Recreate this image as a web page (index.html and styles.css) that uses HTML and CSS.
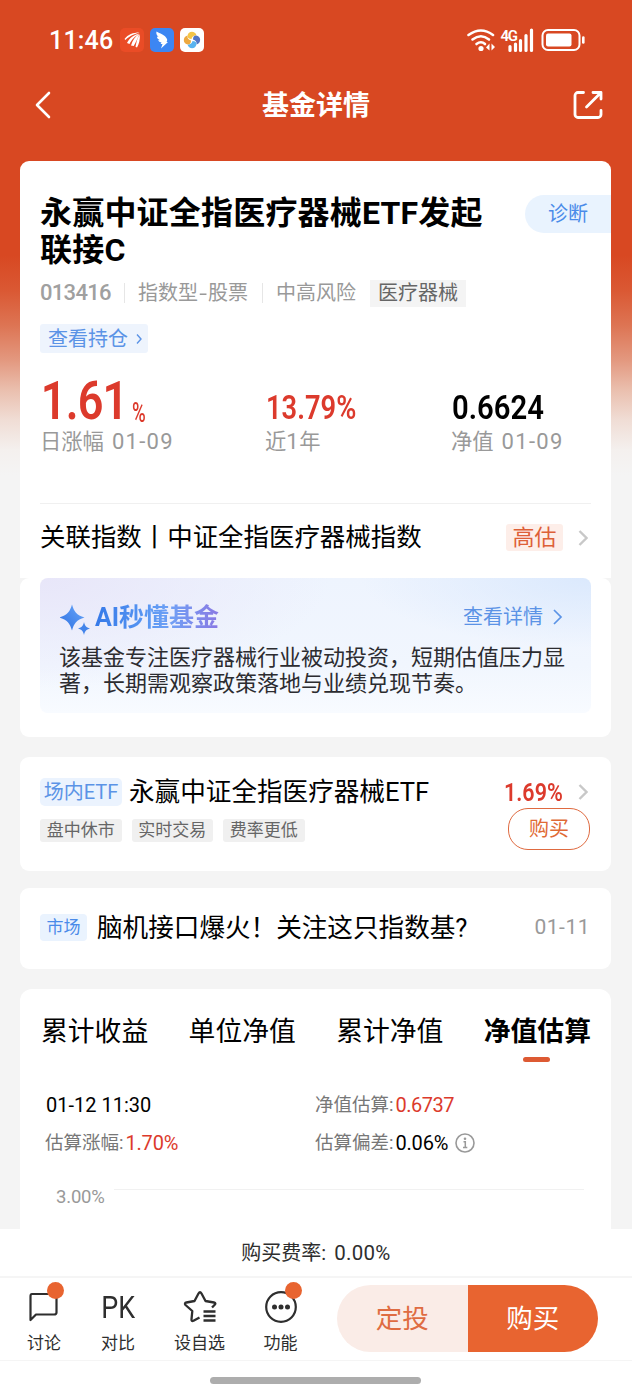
FILE: index.html
```html
<!DOCTYPE html>
<html lang="zh-CN">
<head>
<meta charset="utf-8">
<title>基金详情</title>
<link rel="stylesheet" href="styles.css">
</head>
<body>
<div class="screen">
  <main class="main">
    <header class="status">
      <span class="time">11:46</span>
      <svg class="app" viewBox="0 0 24 24"><rect width="24" height="24" rx="5" fill="#ea4c26"/><path d="M4.500 11C8 6.500 13 4.500 19.500 4.500C13 6.500 9.500 8 5.500 12ZM7 15C9.500 10 14 6.500 19.500 5.500C15 8.500 12 11 9.500 16ZM11 17.500C12.500 12 15.500 8 19.500 6C17 11 16 14 13.700 18ZM15.500 18.800C16.500 14 17 10.500 19.800 6.500C20.200 12 19 16 17 19.500Z" fill="#fff"/></svg>
      <svg class="app" viewBox="0 0 24 24"><rect width="24" height="24" rx="5" fill="#3c86f3"/><path d="M6.500 3.500C10 5.500 14.500 7 16 9.500C17.500 11 17.500 12.500 16.500 14H18L11 20.500L12.500 16H10.500L11.500 14.500C9 14 8.500 13 8.300 12L10 12.200C7.500 11 7 10 7 8.500L8.500 9C6.500 7 6 5.500 6.500 3.500Z" fill="#fff"/></svg>
      <svg class="app" viewBox="0 0 24 24"><rect width="24" height="24" rx="5" fill="#fff"/><path d="M7.500 8C8 2.500 15.500 2.500 16.500 7.500C14 7 12 8.500 11.500 11C9 11 7.500 10 7.500 8Z" fill="#f5c548"/><path d="M16 7.500C21.500 8 21.500 15.500 16.500 16.500C17 14 15.500 12 13 11.500C13 9 14 7.500 16 7.500Z" fill="#5275c6"/><path d="M16.500 16C16 21.500 8.500 21.500 7.500 16.500C10 17 12 15.500 12.500 13C15 13 16.500 14 16.500 16Z" fill="#59b3ef"/><path d="M8 16.500C2.500 16 2.500 8.500 7.500 7.500C7 10 8.500 12 11 12.500C11 15 10 16.500 8 16.500Z" fill="#eda83f"/></svg>
      <svg class="signals" viewBox="0 0 120 26">
        <g fill="none" stroke="#fff" stroke-width="2.600" stroke-linecap="round"><path d="M2.500 8Q15 -1 27 8"/><path d="M6.500 12.500Q15 6 23 12.500"/><path d="M10.500 17Q15 13.500 19 17"/></g>
        <circle cx="15" cy="21.500" r="2.600" fill="#fff"/><path d="M23.500 16.500V23.500L20 20.500ZM25.500 23.500V16.500L29 20Z" fill="#fff"/>
        <text x="34.500" y="13.500" class="net">4G</text>
        <path d="M44 23.500V19.500M49.500 23.500V17M54.500 23.500V13.500M60 23.500V8.500M65.500 23.500V3" stroke="#fff" stroke-width="3.200" stroke-linecap="round"/>
        <rect x="76.500" y="3" width="37" height="20" rx="5.500" fill="none" stroke="#fff" stroke-width="2"/><rect x="80" y="6.500" width="25.500" height="13" rx="2" fill="#fff"/><path d="M117.300 10.500V15.500" stroke="#fff" stroke-width="2.600" stroke-linecap="round"/>
      </svg>
    </header>
    <nav class="nav">
      <svg class="back" viewBox="0 0 18 30"><path d="M15 3L3 15L15 27" fill="none" stroke="#fff" stroke-width="2.600" stroke-linecap="round" stroke-linejoin="round"/></svg>
      <h1>基金详情</h1>
      <svg class="share" viewBox="0 0 30 30"><path d="M10.500 2.500H5A3 3 0 0 0 2 5.500V24.500A3 3 0 0 0 5 27.500H25A3 3 0 0 0 28 24.500V20.500M13.500 17L27 3.500M20 2.500H28V9" fill="none" stroke="#fff" stroke-width="2.800" stroke-linecap="round" stroke-linejoin="round"/></svg>
    </nav>

    <section class="summary">
      <div class="head">
        <h2>永赢中证全指医疗器械ETF发起<br>联接C</h2>
        <span class="diagnose">诊断</span>
      </div>
      <div class="meta">
        <span class="code">013416</span><i class="sep"></i><span class="kind">指数型<b class="dash">-</b>股票</span><i class="sep"></i><span class="risk">中高风险</span><span class="sector">医疗器械</span>
      </div>
      <div class="holding"><span>查看持仓</span><svg width="6" height="12" viewBox="0 0 6 12"><path d="M1 1.500L5 6L1 10.500" fill="none" stroke="#5b93e6" stroke-width="1.400"/></svg></div>
      <div class="stats">
        <div class="stat"><div class="num red"><span class="big">1.61</span><span class="pct">%</span></div><div class="lab">日涨幅<span class="d date">01-09</span></div></div>
        <div class="stat"><div class="num red"><span class="mid year">13.79%</span></div><div class="lab">近<span class="d">1</span>年</div></div>
        <div class="stat"><div class="num"><span class="mid nav-val">0.6624</span></div><div class="lab">净值<span class="d date">01-09</span></div></div>
      </div>
      <div class="index-row"><span class="index-name">关联指数丨中证全指医疗器械指数</span><span class="high">高估</span><svg width="10" height="18" viewBox="0 0 10 18"><path d="M1.500 2L8.500 9L1.500 16" fill="none" stroke="#c8c8c8" stroke-width="2.400"/></svg></div>
    </section>

    <section class="card ai">
      <div class="ai-box">
        <div class="ai-head">
          <svg width="32" height="32" viewBox="0 0 32 32"><defs><linearGradient id="g" x1="0" y1="1" x2="1" y2="0"><stop offset="0" stop-color="#2d6fe0"/><stop offset="1" stop-color="#6aa8fb"/></linearGradient></defs><path d="M12 0.500C14 7.500 16.500 11 24.500 13.500C16.500 16 14 19.500 12 26.500C10 19.500 7.500 16 -0.500 13.500C7.500 11 10 7.500 12 0.500Z" fill="url(#g)"/><path d="M24 18C25 22 26 23.300 30 24.500C26 25.700 25 27 24 31C23 27 22 25.700 18 24.500C22 23.300 23 22 24 18Z" fill="#4384ea"/></svg>
          <span class="ai-title">AI秒懂基金</span>
          <span class="ai-link">查看详情</span>
          <svg width="10" height="18" viewBox="0 0 10 18"><path d="M1 2L8 9L1 16" fill="none" stroke="#5b93e6" stroke-width="1.700"/></svg>
        </div>
        <p>该基金专注医疗器械行业被动投资，短期估值压力显著，长期需观察政策落地与业绩兑现节奏。</p>
      </div>
    </section>

    <section class="card etf">
      <div class="etf-left">
        <div class="etf-title"><span class="etf-tag">场内ETF</span><span class="etf-name">永赢中证全指医疗器械ETF</span></div>
        <div class="chips"><span>盘中休市</span><span>实时交易</span><span>费率更低</span></div>
      </div>
      <div class="etf-right">
        <div class="etf-rate"><span class="rate">1.69%</span><svg width="10" height="18" viewBox="0 0 10 18"><path d="M1.500 2L8.500 9L1.500 16" fill="none" stroke="#c8c8c8" stroke-width="2.400"/></svg></div>
        <span class="buy-small">购买</span>
      </div>
    </section>

    <section class="card news"><span class="news-tag">市场</span><span class="news-title">脑机接口爆火！关注这只指数基?</span><span class="news-date">01-11</span></section>

    <section class="card chart">
      <div class="tabs"><span>累计收益</span><span>单位净值</span><span>累计净值</span><span class="active">净值估算</span></div>
      <div class="estimates">
        <div><span class="v stamp">01-12 11:30</span></div>
        <div>净值估算:<span class="v red">0.6737</span></div>
        <div class="shift">估算涨幅:<span class="v red">1.70%</span></div>
        <div>估算偏差:<span class="v">0.06%</span><svg class="info" viewBox="0 0 20 20"><circle cx="10" cy="10" r="9" fill="none" stroke="#999" stroke-width="1.600"/><circle cx="10" cy="5.800" r="1.300" fill="#999"/><path d="M8.500 8.800H10.300V14.500M8 14.500H12.300" fill="none" stroke="#999" stroke-width="1.500"/></svg></div>
      </div>
      <div class="axis"><span>3.00%</span><i></i></div>
    </section>
  </main>

  <footer class="footer">
    <div class="fee">购买费率:<span class="fee-v">0.00%</span></div>
    <div class="actions">
      <div class="item discuss"><div class="icon"><svg width="32" height="34" viewBox="0 0 32 34"><path d="M4 4H26Q28.500 4 28.500 6.500V22.500Q28.500 24.500 26 24.500H8L2.500 30V6.500Q2.500 4 4 4Z" fill="none" stroke="#2e2e2e" stroke-width="2.200" stroke-linejoin="round"/></svg><i class="dot"></i></div><span>讨论</span></div>
      <div class="item compare"><div class="icon"><b class="pk">PK</b></div><span>对比</span></div>
      <div class="item watch"><div class="icon"><svg width="34" height="34" viewBox="0 0 34 34"><path d="M16.500 27.500L10.500 30.800Q8.300 31.800 8.500 29.300L9.300 21L2.500 15Q1 13 3.500 12.500L11.500 11L15.500 3.500Q17 1 18.500 3.500L22.500 11L31 12.500Q33.500 13 31.500 15L29 17.500M20.500 21.500H32.500M20.500 26H32.500M20.500 30.500H32.500" fill="none" stroke="#2e2e2e" stroke-width="2.300" stroke-linejoin="round"/></svg></div><span>设自选</span></div>
      <div class="item tools"><div class="icon"><svg width="34" height="34" viewBox="0 0 34 34"><circle cx="17" cy="17" r="14.800" fill="none" stroke="#2e2e2e" stroke-width="2.200"/><g fill="#2e2e2e"><circle cx="10.500" cy="17" r="2.500"/><circle cx="17" cy="17" r="2.500"/><circle cx="23.500" cy="17" r="2.500"/></g></svg><i class="dot"></i></div><span>功能</span></div>
      <div class="cta"><span class="plan">定投</span><span class="buy">购买</span></div>
    </div>
    <div class="home"><i></i></div>
  </footer>
</div>
</body>
</html>
```
FILE: styles.css
```css
* { box-sizing: border-box; }
body { margin: 0; font-family: Roboto, "Noto Sans CJK SC", sans-serif; color: #000; line-height: 1; white-space: nowrap; }
h1, h2, p { margin: 0; }
svg { display: block; flex: none; }
i, b { font-style: normal; font-weight: inherit; }
.red { color: #dc3a2c; }

.screen { width: 632px; height: 1400px; display: flex; flex-direction: column; overflow: hidden; }
.main { height: 1229px; overflow: hidden; background: linear-gradient(#d84822 0, #d84822 255px, #da5833 290px, #dd7453 325px, #e3987f 360px, #eabfae 390px, #f0ddd5 420px, #f4f0ee 450px, #f4f4f4 475px); }

.status { height: 80px; padding: 0 46px 0 49px; display: flex; align-items: center; color: #fff; }
.time { width: 71px; font-size: 25px; font-weight: 500; letter-spacing: .2px; }
.app { width: 24px; height: 24px; margin-right: 6px; }
.signals { width: 120px; height: 26px; margin-left: auto; }
.net { font-size: 15px; font-weight: 600; fill: #fff; letter-spacing: -1.3px; }

.nav { height: 81px; padding: 10px 29px 0 34px; display: flex; justify-content: space-between; align-items: flex-start; color: #fff; }
.nav .back { width: 18px; height: 30px; }
.nav h1 { font-size: 27px; font-weight: 700; line-height: 33px; padding-left: 7px; }
.nav .share { width: 30px; height: 30px; }

.summary { height: 417px; margin: 0 21px 0 20px; background: #fff; border-radius: 9px 9px 0 0; padding-left: 20px; }
.head { height: 109px; padding-top: 34px; display: flex; justify-content: space-between; align-items: flex-start; }
.head h2 { font-size: 32px; line-height: 37px; font-weight: 700; letter-spacing: .2px; }
.diagnose { width: 86px; height: 38px; padding-left: 23px; border-radius: 19px 0 0 19px; background: #e9f3fe; color: #4a8be9; font-size: 20px; line-height: 39px; }
.meta { height: 46px; display: flex; align-items: center; font-size: 20px; color: #999; }
.code { width: 84px; font-size: 22px; letter-spacing: -.7px; font-weight: 500; color: #a0a0a0; }
.sep { width: 1px; height: 20px; background: #e6e6e6; }
.kind { width: 137px; padding-left: 13px; }
.dash { display: inline-block; width: 10px; text-align: center; transform: scaleX(1.4); }
.risk { width: 107px; padding-left: 13px; }
.sector { width: 96px; height: 27px; line-height: 27px; text-align: center; color: #666; background: #f4f4f4; }
.holding { width: 108px; height: 29px; margin-top: 8px; padding: 0 6px 0 8px; display: flex; align-items: center; justify-content: space-between; font-size: 20px; color: #5b93e6; background: #eef4fd; border-radius: 3px; }
.stats { height: 151px; margin-right: 20px; display: grid; grid-template-columns: 225px 186px 1fr; border-bottom: 1px solid #f0f0f0; }
.num { height: 76px; display: flex; align-items: flex-end; }
.big { font-size: 53px; font-weight: 600; letter-spacing: -1px; line-height: 44px; width: 92px; padding-left: 1px; transform: scaleX(.85); transform-origin: left; margin-bottom: 6px; }
.pct { font-size: 27px; font-weight: 500; line-height: 28px; transform: scaleX(.69); transform-origin: left; margin-bottom: 2px; }
.mid { font-size: 32.500px; line-height: 32px; font-weight: 600; transform-origin: left; margin-bottom: 5px; }
.year { transform: scaleX(.84); margin-left: 1px; }
.nav-val { transform: scaleX(.9); margin-left: 1px; }
.lab { height: 24px; padding-top: 1px; font-size: 21.3px; line-height: 24px; color: #999; }
.d { font-size: 22px; letter-spacing: .6px; }
.date { margin-left: 8px; letter-spacing: 1.3px; }
.index-row { height: 67px; padding: 0 23px 0 0; display: flex; align-items: center; font-size: 25.45px; }
.index-name { flex: 1; padding-top: 1px; }
.high { width: 57px; height: 27px; line-height: 27px; margin-right: 15px; text-align: center; font-size: 22px; color: #dd6038; background: #fdeee9; border-radius: 3px; }

.card { margin: 0 21px 0 20px; background: #fff; border-radius: 9px; }
.ai { height: 159px; padding: 0 20px 24px 20px; }
.ai-box { height: 135px; padding: 21px 20px 0 19px; border-radius: 8px; background: radial-gradient(ellipse 230px 70px at 100% 0, #dbe9fd, #dbe9fd00), radial-gradient(ellipse 290px 110px at 0 0, #e8e6f9, #e8e6f900), linear-gradient(#eef4fe, #f1f6fe 65%, #f8fbff); }
.ai-head { height: 46px; display: flex; align-items: center; margin-right: 8px; padding: 0 0 10px 1px; }
.ai-head > svg:first-child { margin-top: 6px; }
.ai-title { margin-left: 3px; flex: 1; padding-top: 1px; font-size: 25px; line-height: 34px; font-weight: 700; background: linear-gradient(90deg, #3579e8 0, #5b98f3 55px, #70a0f5 75px, #8a78e3 125px); background-clip: text; -webkit-background-clip: text; color: transparent; }
.ai-link { font-size: 20px; color: #5b93e6; margin-right: 10px; }
.ai p { font-size: 22px; line-height: 26px; white-space: normal; width: 510px; color: #2c2c30; }

.etf { height: 114px; margin-top: 20px; padding: 20px 21px 0 20px; display: flex; justify-content: space-between; }
.etf-title { height: 29px; display: flex; align-items: center; }
.etf-tag { width: 82px; height: 28px; line-height: 28px; margin-right: 7px; text-align: center; font-size: 20px; color: #5b93e6; background: #ebf3fe; border-radius: 5px; }
.etf-name { font-size: 25.6px; padding-top: 3px; }
.chips { display: flex; gap: 10px; margin-top: 13px; }
.chips span { width: 81.500px; height: 23px; line-height: 23px; text-align: center; font-size: 17px; color: #666; background: #f0f0f0; border-radius: 3px; }
.etf-right { width: 86px; }
.etf-rate { height: 31px; display: flex; align-items: center; justify-content: space-between; padding: 0 2px 1px 0; }
.rate { width: 60px; font-size: 26.500px; font-weight: 600; color: #dc3a2c; transform: scaleX(.81); transform-origin: left; }
.buy-small { display: block; width: 82px; height: 42px; margin-left: 4px; border: 1px solid #df6a40; border-radius: 20px; color: #df6a36; text-align: center; font-size: 20px; line-height: 40px; }

.news { height: 81px; margin-top: 17px; padding: 0 21px 2px 20px; display: flex; align-items: center; }
.news-tag { width: 47px; height: 27px; line-height: 27px; text-align: center; font-size: 17px; color: #4a8be9; background: #eaf3fe; border-radius: 4px; }
.news-title { margin-left: 10px; flex: 1; padding-top: 3px; font-size: 25.6px; }
.news-date { font-size: 21px; color: #999; letter-spacing: .5px; }

.chart { height: 300px; margin-top: 20px; padding: 22px 20px 0 21px; border-radius: 12px 12px 0 0; }
.tabs { display: flex; justify-content: space-between; font-size: 26.8px; line-height: 43px; height: 42px; }
.active { position: relative; font-weight: 700; }
.active::after { content: ""; position: absolute; left: 39px; top: 46px; width: 27px; height: 5px; border-radius: 3px; background: #dd5a33; }
.estimates { display: grid; grid-template-columns: 269px 1fr; grid-auto-rows: 38px; margin-top: 33px; padding-left: 5px; font-size: 18.500px; color: #777; }
.estimates div { display: flex; align-items: center; }
.shift { margin-left: -1px; }
.v { font-size: 20px; color: #000; letter-spacing: -.2px; margin-left: 2px; }
.v.stamp { letter-spacing: 0; margin-left: 0; }
.v.red { color: #dc3a2c; letter-spacing: -.5px; }
.shift .v.red { letter-spacing: -.2px; }
.info { width: 20px; height: 20px; margin-left: 7px; }
.axis { height: 40px; margin-top: 12px; padding-left: 15px; display: flex; font-size: 18.500px; line-height: 46px; color: #999; letter-spacing: -.2px; }
.axis i { width: 470px; height: 1px; margin: 15px 0 0 9px; background: #f1f1f1; }

.footer { height: 171px; background: #fff; color: #2e2e2e; }
.fee { height: 49px; border-bottom: 2px solid #f5f5f5; text-align: center; font-size: 20px; line-height: 48px; }
.fee-v { font-size: 20.500px; margin-left: 8px; letter-spacing: .3px; }
.actions { height: 83px; display: flex; border-bottom: 1px solid #f5f5f5; }
.item { width: 74px; display: flex; flex-direction: column; align-items: center; font-size: 17px; }
.item > span { line-height: 22px; }
.icon { position: relative; height: 54px; padding-top: 12px; }
.discuss { margin-left: 7px; }
.watch { width: 89px; }
.tools { width: 73px; }
.pk { display: block; margin-top: 1px; font-size: 32px; line-height: 32px; transform: scaleX(.84); }
.dot { position: absolute; width: 17px; height: 17px; border-radius: 50%; background: #e86430; right: -4px; top: 4px; }
.cta { display: flex; margin: 7px 0 0 20px; width: 261px; height: 67px; border-radius: 34px; overflow: hidden; font-size: 26.500px; line-height: 67px; text-align: center; }
.cta span { flex: 1; }
.plan { background: #faece7; color: #df6c42; }
.buy { background: #e86430; color: #fff; }
.home { padding: 16px 1px 0 0; }
.home i { display: block; width: 211px; height: 7px; margin: 0 auto; border-radius: 4px; background: #adadad; }
```
